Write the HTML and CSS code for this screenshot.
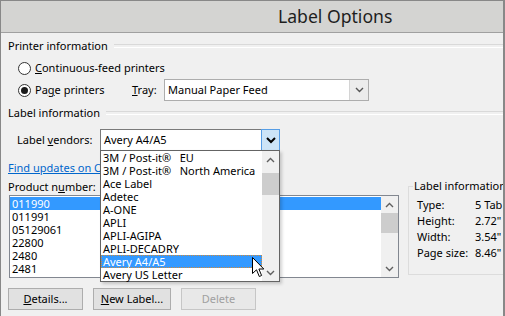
FILE: index.html
```html
<!DOCTYPE html>
<html lang="en">
<head>
  <meta charset="UTF-8">
  <title>Label Options</title>
  <link rel="stylesheet" href="styles.css">
</head>
<body>
<div class="window">
  <div class="titlebar"><span class="title">Label Options</span></div>
  <div class="content">
    <div class="group-head"><span>Printer information</span></div>
    <div class="radio-row">
      <span class="radio"></span>
      <span><u>C</u>ontinuous-feed printers</span>
    </div>
    <div class="radio-row">
      <span class="radio checked"></span>
      <span class="page-label">Pa<u>g</u>e printers</span>
      <span class="tray-label"><u>T</u>ray:</span>
      <div class="combo tray">
        <span class="combo-text">Manual Paper Feed</span>
        <span class="combo-btn">
          <svg width="9" height="6" viewBox="0 0 9 6"><polyline points="1,1 4.5,4.5 8,1" fill="none" stroke="#555" stroke-width="1.4"/></svg>
        </span>
      </div>
    </div>

    <div class="group-head second"><span>Label information</span></div>
    <div class="vendor-row">
      <span class="vendor-label">Label <u>v</u>endors:</span>
      <div class="combo vendor">
        <span class="combo-text">Avery A4/A5</span>
        <span class="combo-btn active">
          <svg width="10" height="7" viewBox="0 0 10 7"><polyline points="1,1 5,5 9,1" fill="none" stroke="#000" stroke-width="2"/></svg>
        </span>
        <div class="dropdown">
          <ul class="items">
            <li>3M / Post-it®&nbsp;&nbsp; EU</li>
            <li>3M / Post-it®&nbsp;&nbsp; North America</li>
            <li>Ace Label</li>
            <li>Adetec</li>
            <li>A-ONE</li>
            <li>APLI</li>
            <li>APLI-AGIPA</li>
            <li>APLI-DECADRY</li>
            <li class="selected">Avery A4/A5</li>
            <li>Avery US Letter</li>
          </ul>
          <div class="scrollbar">
            <span class="arrow"><svg width="9" height="6" viewBox="0 0 9 6"><polyline points="1,5 4.5,1.5 8,5" fill="none" stroke="#606060" stroke-width="1.4"/></svg></span>
            <span class="thumb drop-thumb"></span>
            <span class="track"></span>
            <span class="arrow"><svg width="9" height="6" viewBox="0 0 9 6"><polyline points="1,1 4.5,4.5 8,1" fill="none" stroke="#606060" stroke-width="1.4"/></svg></span>
          </div>
        </div>
      </div>
    </div>

    <a class="link" href="#">Find updates on Office.com</a>

    <div class="product-area">
      <div class="product-col">
        <div>Product n<u>u</u>mber:</div>
        <div class="listbox">
          <ul class="items">
            <li class="selected plain">011990</li>
            <li>011991</li>
            <li>05129061</li>
            <li>22800</li>
            <li>2480</li>
            <li>2481</li>
          </ul>
          <div class="scrollbar">
            <span class="arrow"><svg width="9" height="6" viewBox="0 0 9 6"><polyline points="1,5 4.5,1.5 8,5" fill="none" stroke="#606060" stroke-width="1.4"/></svg></span>
            <span class="thumb"></span>
            <span class="track"></span>
            <span class="arrow"><svg width="9" height="6" viewBox="0 0 9 6"><polyline points="1,1 4.5,4.5 8,1" fill="none" stroke="#606060" stroke-width="1.4"/></svg></span>
          </div>
        </div>
      </div>

      <fieldset class="info">
        <legend>Label information</legend>
        <div class="info-row"><span class="key">Type:</span><span>5 Tab</span></div>
        <div class="info-row"><span class="key">Height:</span><span>2.72"</span></div>
        <div class="info-row"><span class="key">Width:</span><span>3.54"</span></div>
        <div class="info-row"><span class="key">Page size:</span><span>8.46"</span></div>
      </fieldset>
    </div>

    <div class="buttons">
      <button class="btn"><u>D</u>etails...</button>
      <button class="btn wide"><u>N</u>ew Label...</button>
      <button class="btn" disabled>Delete</button>
    </div>
  </div>

  <svg class="cursor" width="13" height="21" viewBox="0 0 13 21">
    <path d="M0.5 0.5 V16.5 L4.5 12.8 L7.3 19.5 L9.6 18.5 L6.9 12 H11.8 Z" fill="#fff" stroke="#000" stroke-width="1" stroke-linejoin="miter"/>
  </svg>
</div>
</body>
</html>
```

FILE: styles.css
```css
* {
  box-sizing: border-box;
}
body {
  margin: 0;
  font-family: "Noto Sans", sans-serif;
  font-size: 11px;
  color: #000;
}
.window {
  width: 505px;
  height: 316px;
  border: 1px solid #888;
  border-bottom: none;
  border-right-width: 2px;
  background: #f0f0f0;
  overflow: hidden;
  position: relative;
}
.titlebar {
  height: 32px;
  background: #d4d4d2;
  border-bottom: 1px solid #a0a0a0;
  padding-left: 277px;
  font-size: 17.6px;
  line-height: 30px;
  color: #1e1e1e;
}
.content {
  padding: 6px 0 0 7px;
  line-height: 14px;
}
.group-head {
  display: flex;
  align-items: center;
  gap: 6px;
}
.group-head::after {
  content: "";
  flex: 1;
  height: 2px;
  border-top: 1px solid #d9d9d9;
  border-bottom: 1px solid #fff;
}
.group-head.second {
  margin-top: 5px;
}
.radio-row {
  display: flex;
  align-items: center;
  height: 22px;
  padding-left: 10px;
}
.group-head + .radio-row {
  margin-top: 4px;
}
.radio {
  width: 13px;
  height: 13px;
  border: 1px solid #333;
  border-radius: 50%;
  background: #fff;
  margin-right: 4px;
  display: grid;
  place-items: center;
}
.radio.checked::after {
  content: "";
  width: 7px;
  height: 7px;
  border-radius: 50%;
  background: #1a1a1a;
}
.page-label {
  width: 97px;
}
.tray-label {
  width: 32px;
}
.combo {
  display: flex;
  align-items: stretch;
  height: 22px;
  border: 1px solid #adadad;
  background: #fff;
}
.combo-text {
  flex: 1;
  padding-left: 3px;
  line-height: 20px;
}
.combo-btn {
  width: 19px;
  display: grid;
  place-items: center;
  background: #ececec;
  border-left: 1px solid #d4d4d4;
}
.combo-btn.active {
  background: #cce4f7;
  border: 1px solid #569de5;
  margin: -1px -1px -1px 0;
  width: 19px;
}
.tray {
  width: 205px;
}
.vendor-row {
  display: flex;
  align-items: center;
  margin-top: 9px;
  padding-left: 9px;
}
.vendor-label {
  width: 83px;
}
.vendor {
  width: 180px;
  position: relative;
  border-color: #7a7a7a;
}
.dropdown {
  position: absolute;
  left: -1px;
  top: 20px;
  width: 180px;
  height: 132px;
  border: 1px solid #646464;
  background: #fff;
  display: flex;
  box-shadow: 2px 2px 3px rgba(0, 0, 0, 0.18);
  z-index: 2;
}
.items {
  list-style: none;
  margin: 0;
  padding: 0;
  flex: 1;
}
.items li {
  height: 13px;
  line-height: 13px;
  padding-left: 2px;
  white-space: nowrap;
}
.items li.selected {
  background: #3399ff;
  color: #fff;
  outline: 1px dotted #d08a3a;
  outline-offset: -1px;
}
.items li.plain {
  outline: none;
}
.scrollbar {
  width: 17px;
  display: flex;
  flex-direction: column;
  background: #f0f0f0;
}
.scrollbar .arrow {
  height: 17px;
  display: grid;
  place-items: center;
}
.scrollbar .thumb {
  height: 20px;
  background: #cdcdcd;
}
.scrollbar .drop-thumb {
  margin-top: 5px;
  height: 22px;
}
.scrollbar .track {
  flex: 1;
}
.link {
  display: block;
  margin-top: 10px;
  color: #0066cc;
  width: max-content;
}
.product-area {
  display: flex;
  align-items: flex-start;
  margin-top: 5px;
}
.product-col {
  width: 391px;
  flex-shrink: 0;
}
.listbox {
  margin: 1px 0 0 1px;
  width: 390px;
  height: 83px;
  border: 1px solid #828790;
  background: #fff;
  display: flex;
}
.listbox .items {
  padding-top: 1px;
}
.info {
  margin: -1px 0 0 9px;
  width: 150px;
  flex-shrink: 0;
  border: 1px solid #dcdcdc;
  padding: 4px 0 13px 8px;
}
.info legend {
  padding: 0 1px;
  margin-left: -4px;
  line-height: 14px;
  white-space: nowrap;
}
.info-row {
  display: flex;
  height: 16px;
  line-height: 16px;
  white-space: nowrap;
}
.info-row .key {
  width: 58px;
  flex-shrink: 0;
}
.buttons {
  display: flex;
  gap: 10px;
  margin-top: 10px;
}
.btn {
  width: 75px;
  height: 22px;
  font: inherit;
  color: #000;
  background: #e1e1e1;
  border: 1px solid #adadad;
  padding: 0;
}
.btn.wide {
  width: 78px;
}
.btn:disabled {
  background: #e8e8e8;
  border-color: #c6c6c6;
  color: #a0a0a0;
}
.cursor {
  position: absolute;
  left: 251px;
  top: 256px;
  z-index: 3;
}
```
